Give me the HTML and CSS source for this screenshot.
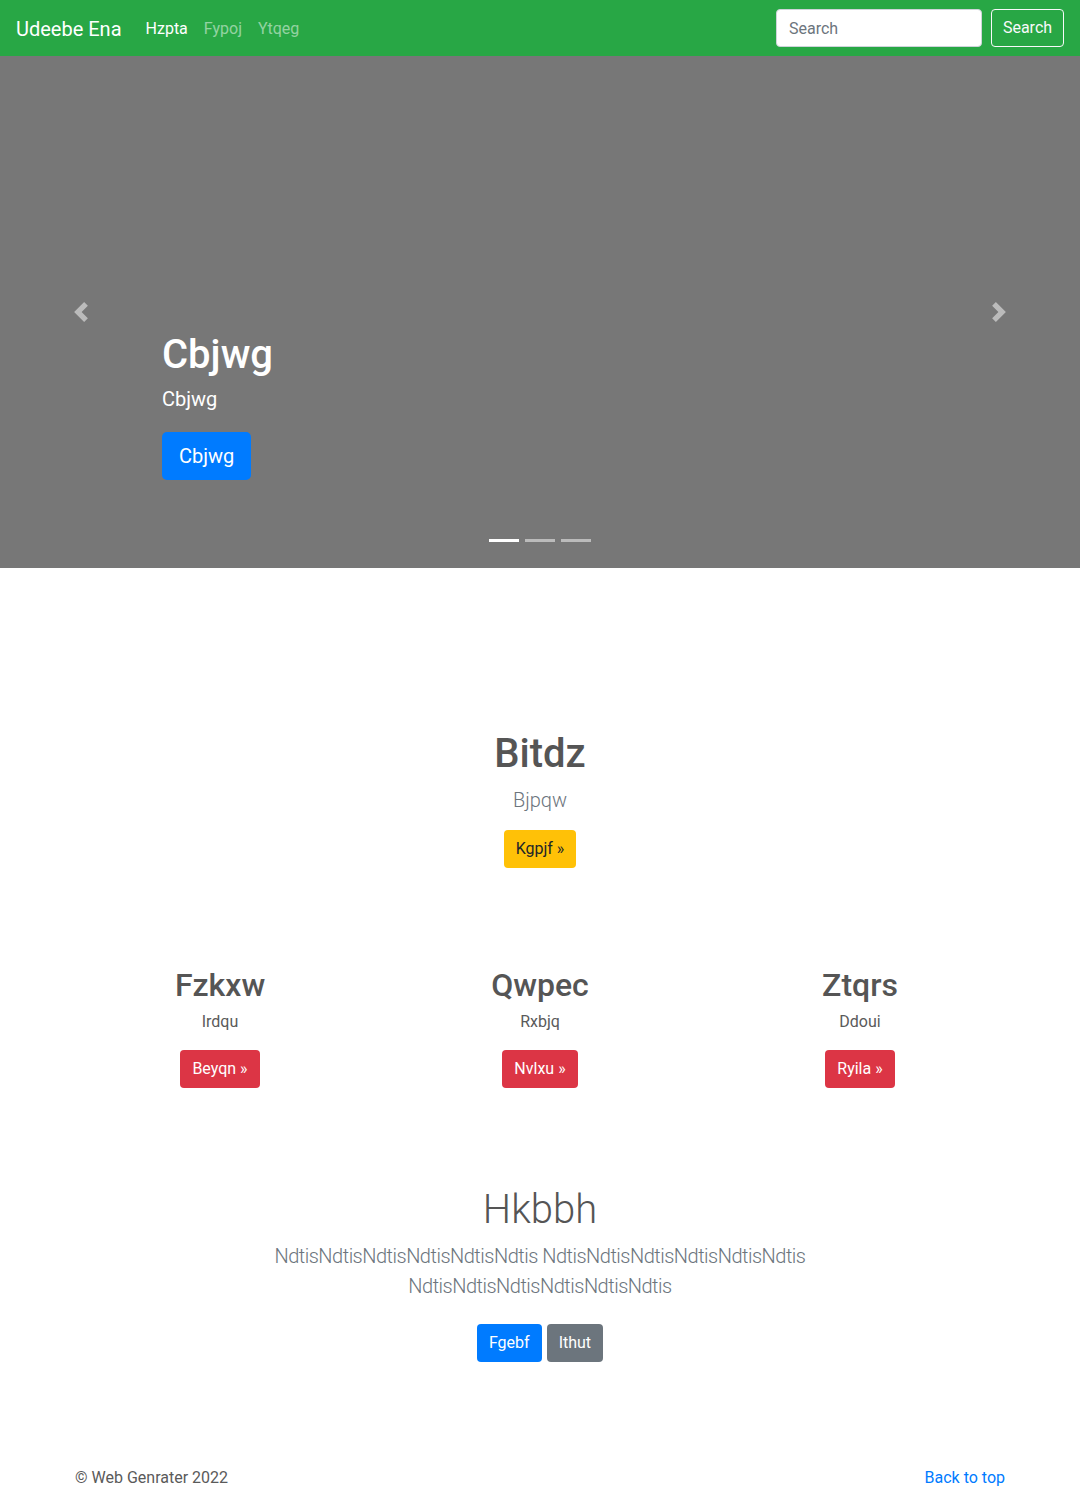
FILE: index.html
```html
<!DOCTYPE html>
<html lang="en">
<head>
<meta charset="utf-8">
<title>Udeebe Ena</title>
<link rel="stylesheet" href="styles.css">
</head>
<body>
<header class="navbar">
  <a class="brand" href="#">Udeebe Ena</a>
  <nav class="nav">
    <a class="nav-link active" href="#">Hzpta</a>
    <a class="nav-link" href="#">Fypoj</a>
    <a class="nav-link" href="#">Ytqeg</a>
  </nav>
  <form class="search">
    <input class="search-input" type="text" placeholder="Search">
    <button class="btn-outline" type="button">Search</button>
  </form>
</header>

<section class="carousel">
  <a class="control prev" href="#"><svg width="20" height="20" viewBox="0 0 8 8"><path fill="#fff" d="M5.25 0l-4 4 4 4 1.5-1.5L4.25 4l2.5-2.5L5.25 0z"/></svg></a>
  <a class="control next" href="#"><svg width="20" height="20" viewBox="0 0 8 8"><path fill="#fff" d="M2.75 0l-1.5 1.5L3.75 4l-2.5 2.5L2.75 8l4-4-4-4z"/></svg></a>
  <div class="caption">
    <h1 class="caption-title">Cbjwg</h1>
    <p class="caption-text">Cbjwg</p>
    <a class="btn btn-lg btn-primary" href="#">Cbjwg</a>
  </div>
  <ol class="indicators">
    <li class="ind active"></li>
    <li class="ind"></li>
    <li class="ind"></li>
  </ol>
</section>

<main class="marketing">
  <section class="hero">
    <h1 class="hero-title">Bitdz</h1>
    <p class="lead">Bjpqw</p>
    <a class="btn btn-warning" href="#">Kgpjf &raquo;</a>
  </section>

  <section class="cols">
    <div class="col">
      <h2 class="col-title">Fzkxw</h2>
      <p class="col-text">Irdqu</p>
      <a class="btn btn-danger" href="#">Beyqn &raquo;</a>
    </div>
    <div class="col">
      <h2 class="col-title">Qwpec</h2>
      <p class="col-text">Rxbjq</p>
      <a class="btn btn-danger" href="#">Nvlxu &raquo;</a>
    </div>
    <div class="col">
      <h2 class="col-title">Ztqrs</h2>
      <p class="col-text">Ddoui</p>
      <a class="btn btn-danger" href="#">Ryila &raquo;</a>
    </div>
  </section>

  <section class="feature">
    <h1 class="display">Hkbbh</h1>
    <p class="lead wide">NdtisNdtisNdtisNdtisNdtisNdtis NdtisNdtisNdtisNdtisNdtisNdtis NdtisNdtisNdtisNdtisNdtisNdtis</p>
    <div class="btn-row">
      <a class="btn btn-primary" href="#">Fgebf</a>
      <a class="btn btn-secondary" href="#">Ithut</a>
    </div>
  </section>
</main>

<footer class="footer">
  <p class="copy">&copy; Web Genrater 2022</p>
  <a class="top-link" href="#">Back to top</a>
</footer>
</body>
</html>
```

FILE: styles.css
```css
* { box-sizing: border-box; }
html, body { margin: 0; padding: 0; }
body {
  font-family: Roboto, "Noto Sans", "Liberation Sans", sans-serif;
  font-size: 16px;
  line-height: 1.5;
  color: #5a5a5a;
  background: #fff;
  width: 1080px;
}
a { text-decoration: none; }

/* navbar */
.navbar {
  height: 56px;
  background: #28a745;
  display: flex;
  align-items: center;
  padding: 0 16px;
}
.brand {
  color: #fff;
  font-size: 20px;
  line-height: 30px;
  margin-right: 16px;
  padding-top: 2px;
}
.nav { display: flex; padding-top: 1px; }
.nav-link {
  color: rgba(255,255,255,.5);
  padding: 8px;
  font-size: 16px;
}
.nav-link.active { color: #fff; }
.search {
  margin-left: auto;
  display: flex;
  align-items: center;
}
.search-input {
  width: 206px;
  height: 38px;
  border: 1px solid #ced4da;
  border-radius: 4px;
  padding: 6px 12px;
  font: inherit;
  font-size: 16px;
  color: #495057;
  margin-right: 9px;
  outline: none;
}
.search-input::placeholder { color: #6c757d; }
.btn-outline {
  width: 73px;
  height: 38px;
  padding: 6px 0;
  background: transparent;
  border: 1px solid #f8f9fa;
  border-radius: 4px;
  color: #f8f9fa;
  font: inherit;
  font-size: 16px;
  line-height: 24px;
  text-align: center;
}

/* carousel */
.carousel {
  position: relative;
  height: 512px;
  background: #777;
  display: flex;
  flex-direction: column;
  justify-content: flex-end;
  padding: 0 162px 88px;
}
.control {
  position: absolute;
  top: 0;
  bottom: 0;
  width: 162px;
  display: flex;
  align-items: center;
  justify-content: center;
  opacity: .5;
}
.control svg { display: block; }
.prev { left: 0; }
.next { right: 0; }
.caption { color: #fff; position: relative; }
.caption-title {
  margin: 0 0 5px;
  font-size: 40px;
  line-height: 48px;
  font-weight: 500;
}
.caption-text {
  margin: 0 0 18px;
  font-size: 20px;
  line-height: 30px;
}
.indicators {
  position: absolute;
  left: 0;
  right: 0;
  bottom: 26px;
  margin: 0;
  padding: 0;
  list-style: none;
  display: flex;
  justify-content: center;
  gap: 6px;
}
.ind {
  width: 30px;
  height: 3px;
  background: #fff;
  opacity: .5;
}
.ind.active { opacity: 1; }

/* buttons */
.btn {
  display: inline-block;
  font-size: 16px;
  line-height: 24px;
  padding: 7px 12px;
  border-radius: 4px;
  color: #fff;
}
.btn-lg {
  font-size: 20px;
  line-height: 30px;
  padding: 9px 17px;
  border-radius: 5px;
}
.btn-primary { background: #007bff; }
.btn-secondary { background: #6c757d; }
.btn-danger { background: #dc3545; }
.btn-warning { background: #ffc107; color: #212529; }

/* marketing */
.marketing {
  width: 960px;
  margin: 0 auto;
  text-align: center;
}
.hero { padding-top: 162px; }
.hero-title {
  margin: 0 0 7px;
  font-size: 40px;
  line-height: 48px;
  font-weight: 500;
  color: #555;
}
.lead {
  margin: 0 0 15px;
  font-size: 20px;
  line-height: 30px;
  font-weight: 300;
  color: #6c757d;
}
.cols {
  display: grid;
  grid-template-columns: repeat(3, 1fr);
  margin-top: 98px;
}
.col-title {
  margin: 0 0 6px;
  font-size: 32px;
  line-height: 38px;
  font-weight: 500;
  color: #555;
}
.col-text {
  margin: 0 0 16px;
  font-size: 16px;
  line-height: 24px;
}
.feature { padding-top: 98px; }
.display {
  margin: 0 0 7px;
  font-size: 40px;
  line-height: 48px;
  font-weight: 300;
  color: #555;
}
.wide {
  max-width: 580px;
  margin: 0 auto 23px;
  letter-spacing: -0.5px;
}
.btn-row {
  display: flex;
  justify-content: center;
  gap: 5px;
}

/* footer */
.footer {
  width: 960px;
  margin: 0 auto;
  padding: 104px 15px 0;
  display: flex;
  justify-content: space-between;
  align-items: center;
}
.copy { margin: 0; line-height: 24px; }
.top-link { color: #007bff; line-height: 24px; }
```
